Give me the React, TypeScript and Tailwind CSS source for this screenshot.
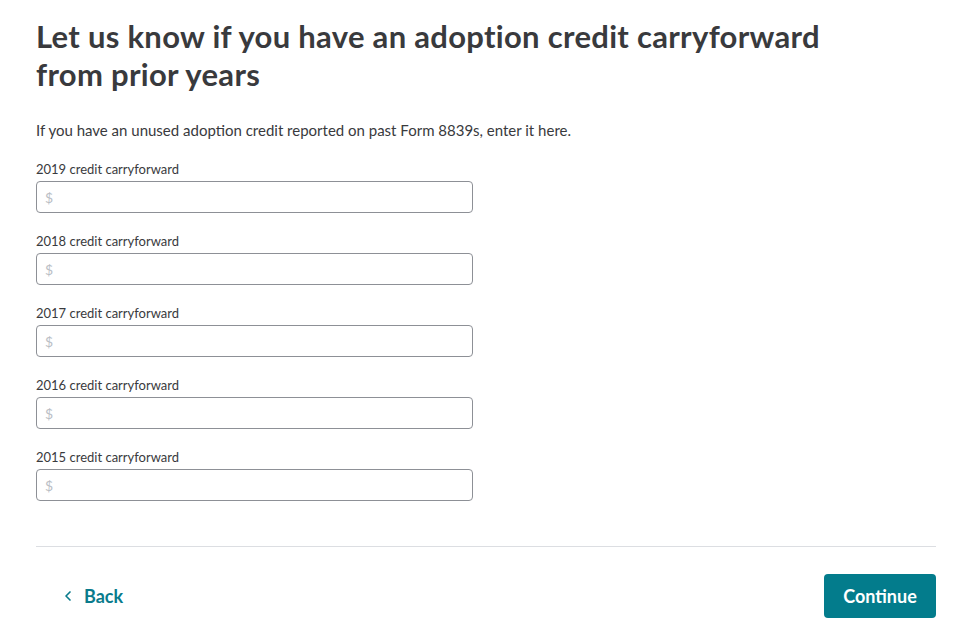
import { ChevronLeft } from "lucide-react";

const years = ["2019", "2018", "2017", "2016", "2015"];

export default function App() {
  return (
    <div
      className="min-h-[638px] bg-white pl-9 pr-[25px] pt-[17px] text-[#393a3d]"
      style={{ fontFamily: "Lato, 'Noto Sans', sans-serif" }}
    >
      {/* Heading */}
      <h1 className="max-w-[800px] text-[31px] font-bold leading-[38px] tracking-[0.3px]">
        Let us know if you have an adoption credit carryforward from prior years
      </h1>

      <p className="mt-[27px] text-[15px] leading-5">
        If you have an unused adoption credit reported on past Form 8839s, enter it here.
      </p>

      {/* Fields */}
      <div className="mt-[21px] flex flex-col gap-[20px]">
        {years.map((y) => (
          <div key={y} className="flex flex-col">
            <label className="text-[13px] leading-4">{y} credit carryforward</label>
            <div className="mt-[4px] flex h-8 w-[437px] items-center rounded-[4px] border border-[#8d9096] px-2">
              <span className="text-[14px] text-[#babec5]">$</span>
            </div>
          </div>
        ))}
      </div>

      {/* Footer */}
      <div className="mt-[45px] border-t border-[#dcdee2]" />
      <div className="mt-[27px] flex items-center justify-between">
        <button
          type="button"
          className="ml-[24px] flex items-center gap-[8px] text-[18px] font-bold text-[#0a7b8c]"
        >
          <ChevronLeft className="h-4 w-4" strokeWidth={2.5} />
          Back
        </button>
        <button
          type="button"
          className="h-[44px] w-[112px] rounded-[4px] bg-[#037c8c] text-[18px] font-bold text-white"
        >
          Continue
        </button>
      </div>
    </div>
  );
}
